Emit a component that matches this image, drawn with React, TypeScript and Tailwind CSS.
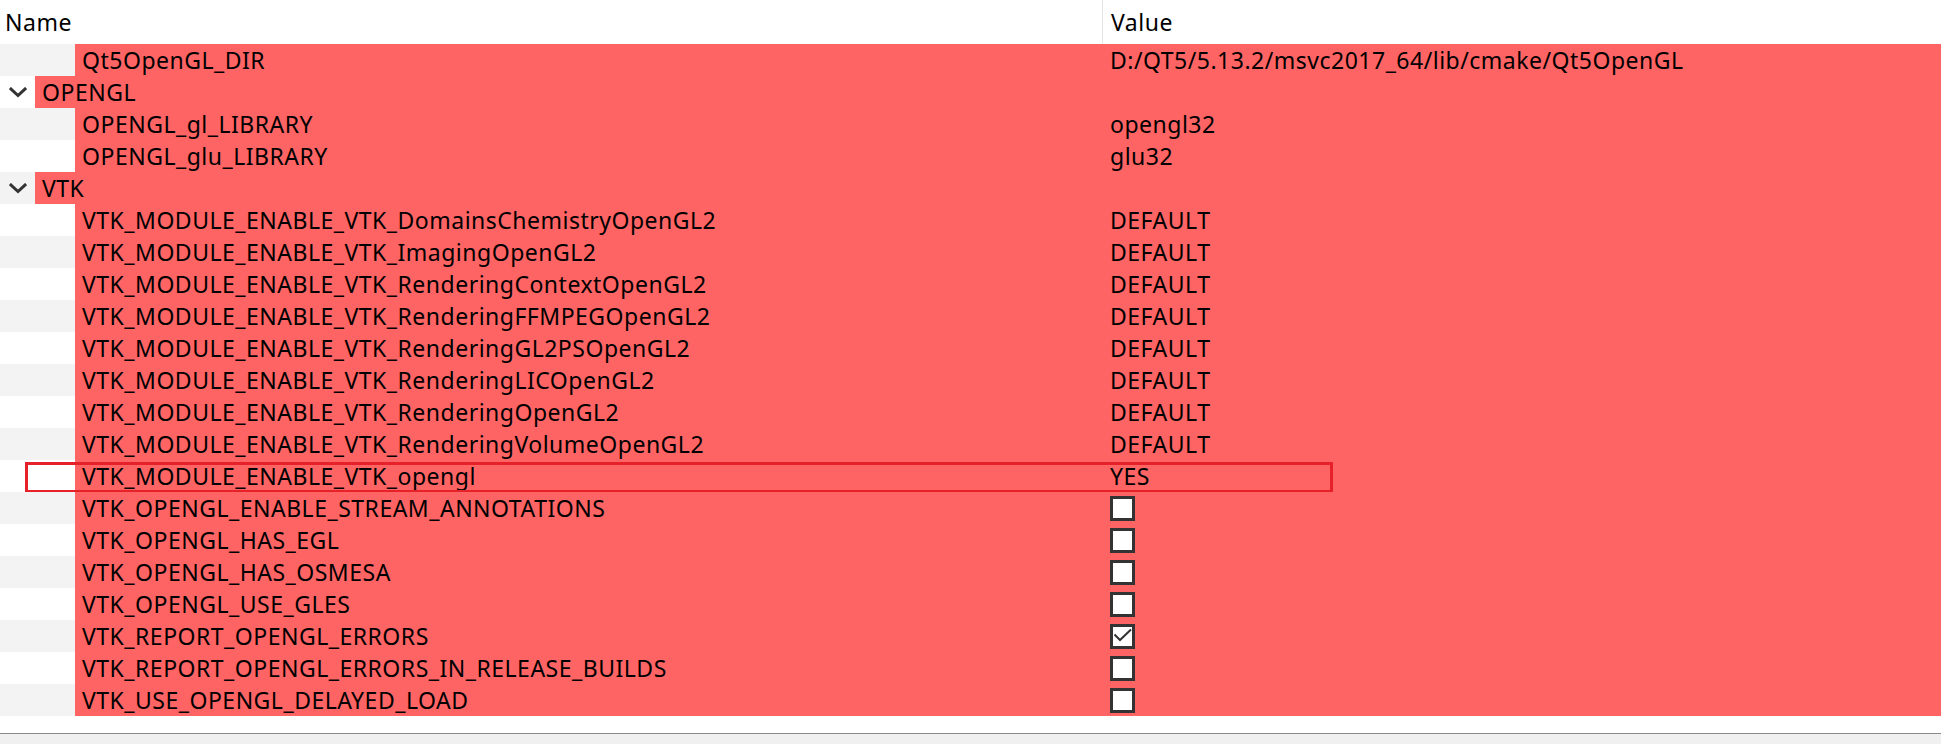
import React from "react";

type Row =
  | { kind: "group"; name: string }
  | { kind: "item"; name: string; value?: string; check?: boolean; boxed?: boolean };

const rows: Row[] = [
  { kind: "item", name: "Qt5OpenGL_DIR", value: "D:/QT5/5.13.2/msvc2017_64/lib/cmake/Qt5OpenGL" },
  { kind: "group", name: "OPENGL" },
  { kind: "item", name: "OPENGL_gl_LIBRARY", value: "opengl32" },
  { kind: "item", name: "OPENGL_glu_LIBRARY", value: "glu32" },
  { kind: "group", name: "VTK" },
  { kind: "item", name: "VTK_MODULE_ENABLE_VTK_DomainsChemistryOpenGL2", value: "DEFAULT" },
  { kind: "item", name: "VTK_MODULE_ENABLE_VTK_ImagingOpenGL2", value: "DEFAULT" },
  { kind: "item", name: "VTK_MODULE_ENABLE_VTK_RenderingContextOpenGL2", value: "DEFAULT" },
  { kind: "item", name: "VTK_MODULE_ENABLE_VTK_RenderingFFMPEGOpenGL2", value: "DEFAULT" },
  { kind: "item", name: "VTK_MODULE_ENABLE_VTK_RenderingGL2PSOpenGL2", value: "DEFAULT" },
  { kind: "item", name: "VTK_MODULE_ENABLE_VTK_RenderingLICOpenGL2", value: "DEFAULT" },
  { kind: "item", name: "VTK_MODULE_ENABLE_VTK_RenderingOpenGL2", value: "DEFAULT" },
  { kind: "item", name: "VTK_MODULE_ENABLE_VTK_RenderingVolumeOpenGL2", value: "DEFAULT" },
  { kind: "item", name: "VTK_MODULE_ENABLE_VTK_opengl", value: "YES", boxed: true },
  { kind: "item", name: "VTK_OPENGL_ENABLE_STREAM_ANNOTATIONS", check: false },
  { kind: "item", name: "VTK_OPENGL_HAS_EGL", check: false },
  { kind: "item", name: "VTK_OPENGL_HAS_OSMESA", check: false },
  { kind: "item", name: "VTK_OPENGL_USE_GLES", check: false },
  { kind: "item", name: "VTK_REPORT_OPENGL_ERRORS", check: true },
  { kind: "item", name: "VTK_REPORT_OPENGL_ERRORS_IN_RELEASE_BUILDS", check: false },
  { kind: "item", name: "VTK_USE_OPENGL_DELAYED_LOAD", check: false },
];

function Chevron() {
  return (
    <svg width="18" height="11" viewBox="0 0 18 11" fill="none">
      <path d="M2 2 L9 8.5 L16 2" stroke="#333" strokeWidth="3" strokeLinecap="square" />
    </svg>
  );
}

function CheckBox({ checked }: { checked: boolean }) {
  return (
    <div className="h-[25px] w-[25px] border-[3px] border-[#333] bg-white">
      {checked && (
        <svg width="19" height="19" viewBox="0 0 19 19" fill="none">
          <path d="M1.5 7.5 L7 13 L18 2.5" stroke="#333" strokeWidth="2" />
        </svg>
      )}
    </div>
  );
}

export default function App() {
  return (
    <div
      className="flex h-[744px] w-[1941px] flex-col overflow-hidden bg-white text-[23px] tracking-[0.5px] text-black"
      style={{ fontFamily: '"Noto Sans", "Open Sans", sans-serif' }}
    >
      <div className="flex h-[44px] items-center">
        <div className="w-[1102px] pl-[5px]">Name</div>
        <div className="h-full w-px bg-[#e5e5e5]" />
        <div className="pl-[8px]">Value</div>
      </div>
      {rows.map((r, i) => {
        const zebra = i % 2 === 0 ? "bg-[#f3f3f3]" : "bg-white";
        if (r.kind === "group") {
          return (
            <div key={r.name} className="flex h-[32px] items-center">
              <div className={`flex h-full w-[35px] items-center justify-center ${zebra}`}>
                <Chevron />
              </div>
              <div className="flex h-full flex-1 items-center bg-[#ff6464] pl-[7px] leading-none">
                {r.name}
              </div>
            </div>
          );
        }
        return (
          <div key={r.name} className="relative flex h-[32px] items-center">
            <div className={`h-full w-[75px] ${zebra}`} />
            <div className="flex h-full flex-1 items-center bg-[#ff6464] leading-none">
              <div className="w-[1027px] pl-[7px]">{r.name}</div>
              <div className="pl-[8px]">
                {r.value ?? <CheckBox checked={!!r.check} />}
              </div>
            </div>
            {r.boxed && (
              <div className="absolute left-[25px] top-[2px] h-[31px] w-[1308px] border-[3px] border-[#e62129]" />
            )}
          </div>
        );
      })}
      <div className="h-[17px]" />
      <div className="flex-1 border-t border-[#8a8a8a] bg-[#f0f0f0]" />
    </div>
  );
}
